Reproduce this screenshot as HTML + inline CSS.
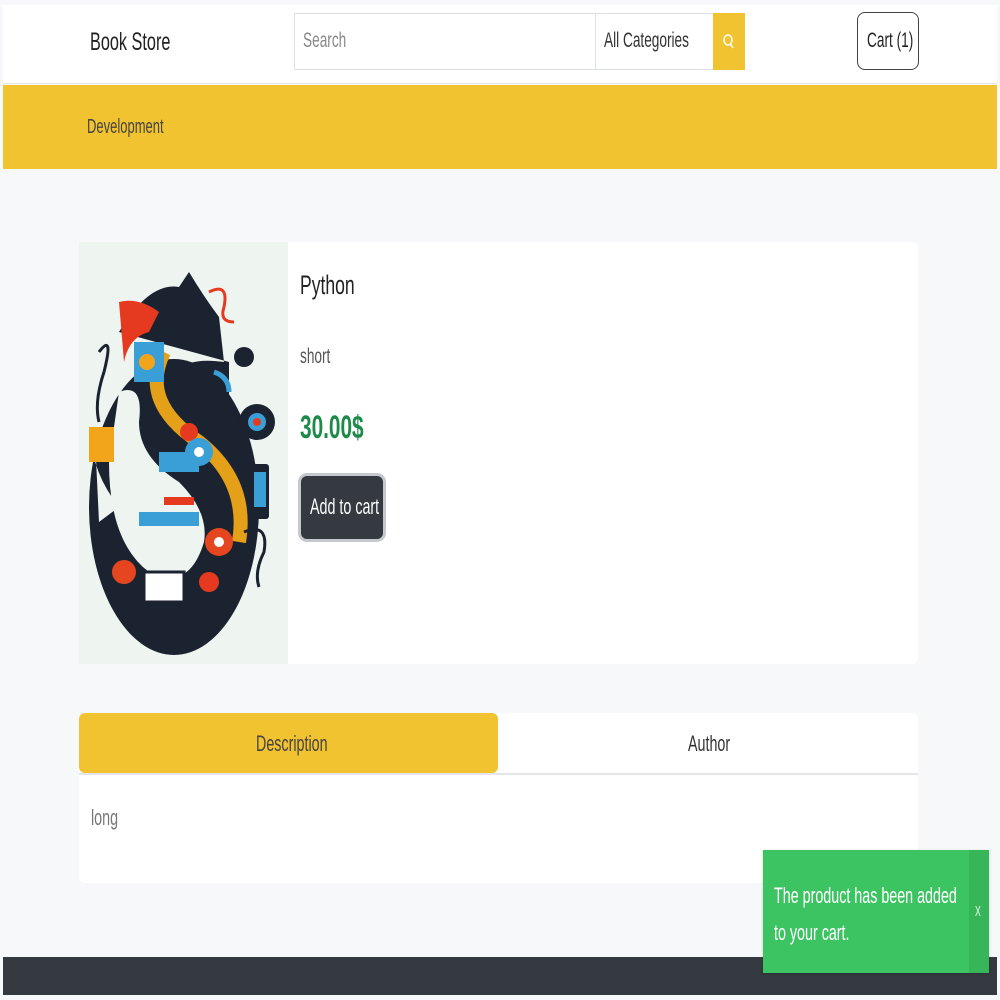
<!DOCTYPE html>
<html><head><style>
*{margin:0;padding:0;box-sizing:border-box}
body{width:1000px;height:1000px;background:#f7f8fa;font-family:"Liberation Sans",sans-serif;position:relative;overflow:hidden;color:#333}
.a{position:absolute}
.t{display:inline-block;transform:scaleX(.65);transform-origin:left center;white-space:nowrap}
</style></head><body>
<div class="a" style="left:3px;top:5px;width:994px;height:79px;background:#fff;border-bottom:1px solid #e6e6e6"></div>
<div class="a" style="left:90px;top:28px;font-size:25px;color:#222"><span class="t">Book Store</span></div>
<div class="a" style="left:294px;top:13px;width:302px;height:57px;border:1px solid #dde1e5;background:#fff"></div>
<div class="a" style="left:303px;top:29px;font-size:21px;color:#888"><span class="t">Search</span></div>
<div class="a" style="left:595px;top:13px;width:119px;height:57px;border:1px solid #dde1e5;background:#fff"></div>
<div class="a" style="left:604px;top:29px;font-size:21px;color:#333"><span class="t">All Categories</span></div>
<div class="a" style="left:713px;top:13px;width:32px;height:57px;background:#f2c331"></div>
<svg class="a" style="left:721px;top:32px" width="16" height="20" viewBox="0 0 16 20"><ellipse cx="7" cy="8" rx="4" ry="5" fill="none" stroke="#fff" stroke-width="1.5"/><line x1="9.5" y1="12" x2="12" y2="16" stroke="#fff" stroke-width="1.5"/></svg>
<div class="a" style="left:857px;top:12px;width:62px;height:58px;border:1.5px solid #444;border-radius:8px"></div>
<div class="a" style="left:867px;top:29px;font-size:21px;color:#222"><span class="t">Cart (1)</span></div>
<div class="a" style="left:3px;top:85px;width:994px;height:84px;background:#f2c331"></div>
<div class="a" style="left:87px;top:116px;font-size:20px;color:#444"><span class="t">Development</span></div>

<div class="a" style="left:79px;top:242px;width:839px;height:422px;background:#fff;border-radius:6px"></div>
<div class="a" style="left:79px;top:242px;width:209px;height:422px;background:#eef4ef"></div>
<svg class="a" style="left:79px;top:242px" width="209" height="422" viewBox="0 0 209 422">
<ellipse cx="95" cy="265" rx="85" ry="148" fill="#1b2230"/>
<path d="M40 90 Q70 40 100 45 L110 30 Q125 55 140 75 L145 120 Q110 115 95 130 Q80 160 120 200 Q165 250 150 330 L150 120 Z" fill="#1b2230"/>
<path d="M30 220 Q30 300 70 330 Q110 350 125 300 Q130 270 100 240 Q60 215 60 180 Q65 140 40 150 Z" fill="#eef4ef"/>
<path d="M15 175 Q5 220 40 265 L20 280 Z" fill="#eef4ef"/>
<path d="M85 110 Q60 160 120 200 Q170 240 160 300" fill="none" stroke="#e5a01a" stroke-width="14"/>
<path d="M40 60 Q60 55 80 70 L70 90 Q50 95 45 120 Z" fill="#e53a1f"/>
<rect x="55" y="100" width="30" height="40" fill="#3a9fd6"/>
<circle cx="68" cy="120" r="8" fill="#f2a51a"/>
<rect x="10" y="185" width="25" height="35" fill="#f2a51a"/>
<rect x="80" y="210" width="40" height="20" fill="#3a9fd6"/>
<rect x="60" y="270" width="60" height="14" fill="#3a9fd6"/>
<rect x="85" y="255" width="30" height="8" fill="#e53a1f"/>
<rect x="65" y="330" width="40" height="30" fill="#fff" stroke="#1b2230" stroke-width="3"/>
<circle cx="110" cy="190" r="9" fill="#e53a1f"/>
<circle cx="140" cy="300" r="14" fill="#e5461f"/><circle cx="140" cy="300" r="5" fill="#fff"/>
<circle cx="45" cy="330" r="12" fill="#e5461f"/>
<circle cx="130" cy="340" r="10" fill="#e53a1f"/>
<circle cx="120" cy="210" r="14" fill="#3a9fd6"/><circle cx="120" cy="210" r="5" fill="#fff"/>
<circle cx="178" cy="180" r="18" fill="#1b2230"/><circle cx="178" cy="180" r="9" fill="#3a9fd6"/><circle cx="178" cy="180" r="4" fill="#e53a1f"/>
<rect x="172" y="222" width="18" height="55" rx="3" fill="#1b2230"/><rect x="175" y="230" width="12" height="35" fill="#3a9fd6"/>
<circle cx="165" cy="115" r="10" fill="#1b2230"/>
<path d="M130 50 Q150 40 145 65 Q140 80 155 80" fill="none" stroke="#e53a1f" stroke-width="3"/>
<path d="M135 130 Q150 135 150 150" fill="none" stroke="#3a9fd6" stroke-width="5"/>
<path d="M20 110 Q35 90 25 130 Q15 160 20 180" fill="none" stroke="#1b2230" stroke-width="3"/>
<path d="M165 290 Q190 280 185 310 Q175 330 180 345" fill="none" stroke="#1b2230" stroke-width="3"/>
</svg>
<div class="a" style="left:300px;top:270px;font-size:27px;color:#222"><span class="t">Python</span></div>
<div class="a" style="left:300px;top:345px;font-size:21px;color:#555"><span class="t">short</span></div>
<div class="a" style="left:300px;top:409px;font-size:32px;color:#1e8a4a;font-weight:bold"><span class="t">30.00$</span></div>
<div class="a" style="left:298px;top:473px;width:88px;height:69px;background:#343a40;border:3px solid #c5c8cc;border-radius:9px"></div>
<div class="a" style="left:310px;top:494px;font-size:22px;color:#fff"><span class="t">Add to cart</span></div>

<div class="a" style="left:79px;top:713px;width:839px;height:170px;background:#fff;border-radius:6px"></div>
<div class="a" style="left:79px;top:713px;width:419px;height:60px;background:#f2c331;border-radius:6px"></div>
<div class="a" style="left:79px;top:773px;width:839px;height:2px;background:#e3e5e8"></div>
<div class="a" style="left:256px;top:731px;font-size:22px;color:#444"><span class="t">Description</span></div>
<div class="a" style="left:688px;top:731px;font-size:22px;color:#333"><span class="t">Author</span></div>
<div class="a" style="left:91px;top:805px;font-size:22px;color:#777"><span class="t">long</span></div>

<div class="a" style="left:3px;top:957px;width:994px;height:38px;background:#343a40"></div>
<div class="a" style="left:763px;top:850px;width:226px;height:123px;background:#3cc462;box-shadow:0 1px 3px rgba(0,0,0,.2)"></div>
<div class="a" style="left:969px;top:850px;width:20px;height:123px;background:#37b659"></div>
<div class="a" style="left:975px;top:900px;font-size:18px;color:#c9f0d3"><span class="t">x</span></div>
<div class="a" style="left:774px;top:877px;font-size:22px;color:#fff;line-height:37px"><span class="t">The product has been added<br>to your cart.</span></div>
</body></html>
